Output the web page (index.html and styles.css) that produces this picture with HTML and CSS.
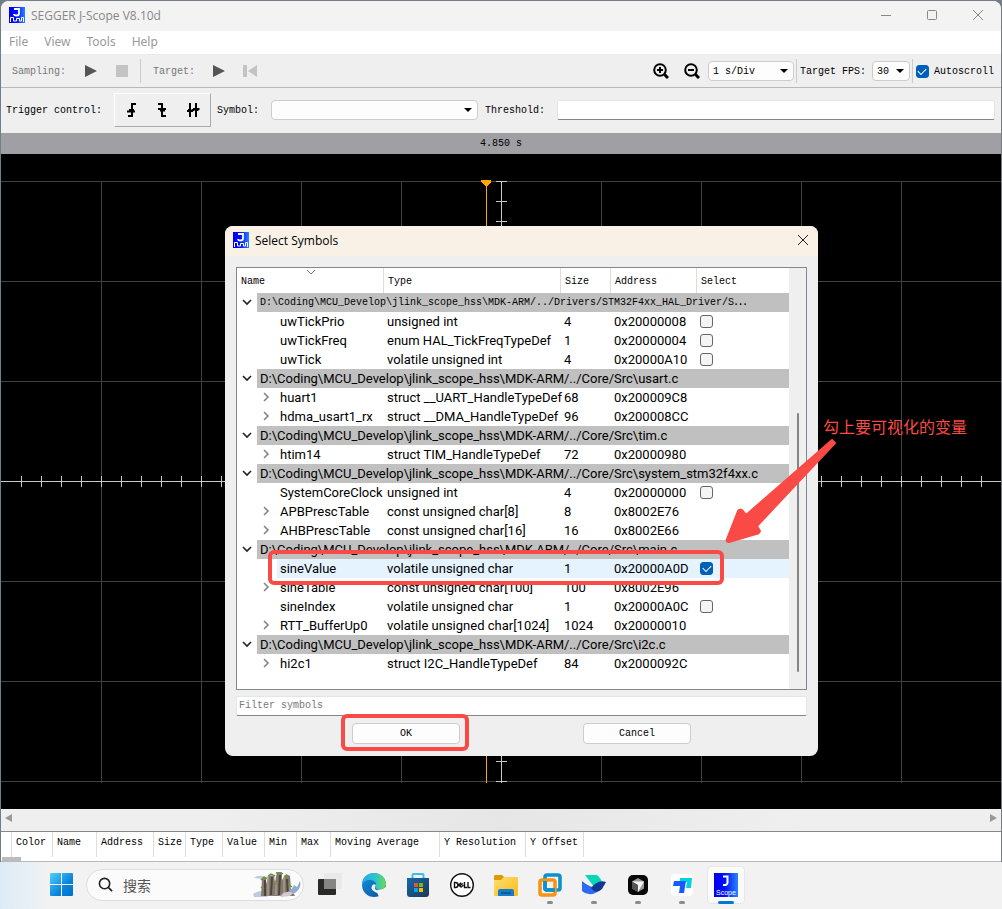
FILE: index.html
```html
<!DOCTYPE html>
<html lang="en">
<head>
<meta charset="utf-8">
<title>SEGGER J-Scope V8.10d</title>
<link rel="stylesheet" href="styles.css">
</head>
<body>
<svg class="defs" aria-hidden="true">
  <defs>
    <linearGradient id="blue" x1="0" x2="1"><stop offset="0" stop-color="#0000e8"/><stop offset=".45" stop-color="#0010ff"/><stop offset="1" stop-color="#2a84ff"/></linearGradient>
    <symbol id="logo" viewBox="0 0 16 16">
      <rect width="16" height="16" fill="url(#blue)"/>
      <path d="M5 2h5v4.500q0 2-2.500 2T5 7" fill="none" stroke="#fff" stroke-width="1.800"/>
      <path d="M1.500 15v-4.500h3V14h3v-2.500h3V14h2v-3.500h2V15" fill="none" stroke="#fff" stroke-width="1"/>
    </symbol>
    <symbol id="down" viewBox="0 0 10 8"><path d="M1 2l4 4 4-4" fill="none" stroke="#222" stroke-width="1.600"/></symbol>
    <symbol id="right" viewBox="0 0 8 10"><path d="M2 1l4 4-4 4" fill="none" stroke="#858585" stroke-width="1.600"/></symbol>
    <symbol id="play" viewBox="0 0 12 12"><path d="M0 0l12 6-12 6z" fill="#555"/></symbol>
  </defs>
</svg>

<main class="window">
  <header class="titlebar">
    <svg class="app-logo"><use href="#logo"/></svg>
    <h1>SEGGER J-Scope V8.10d</h1>
    <div class="caption-buttons">
      <button aria-label="Minimize"><svg viewBox="0 0 12 12"><path d="M1 6.500h10"/></svg></button>
      <button aria-label="Maximize"><svg viewBox="0 0 12 12"><rect x="1.500" y="1.500" width="9" height="9" rx="1"/></svg></button>
      <button aria-label="Close"><svg viewBox="0 0 12 12"><path d="M1 1l10 10M11 1L1 11"/></svg></button>
    </div>
  </header>
  <nav class="menubar">
    <button>File</button><button>View</button><button>Tools</button><button>Help</button>
  </nav>

  <div class="toolbar">
    <span class="dim sampling">Sampling:</span>
    <button class="tool" aria-label="Start sampling"><svg class="glyph"><use href="#play"/></svg></button>
    <button class="tool" aria-label="Stop sampling"><svg class="glyph" viewBox="0 0 12 12"><path d="M0 0h12v12H0z" fill="#c3c3c3"/></svg></button>
    <i class="rule"></i>
    <span class="dim target">Target:</span>
    <button class="tool" aria-label="Run target"><svg class="glyph"><use href="#play"/></svg></button>
    <button class="tool" aria-label="Reset target"><svg class="glyph wide" viewBox="0 0 14 12"><path d="M0 0h4v12H0zM14 0v12L5 6z" fill="#c3c3c3"/></svg></button>
    <span class="spacer"></span>
    <button class="tool" aria-label="Zoom in"><svg class="lens" viewBox="0 0 16 16"><circle cx="7" cy="7" r="5.800"/><path d="M11.500 11.500l3.500 3.500" stroke-width="3"/><path d="M4 7h6M7 4v6"/></svg></button>
    <button class="tool" aria-label="Zoom out"><svg class="lens" viewBox="0 0 16 16"><circle cx="7" cy="7" r="5.800"/><path d="M11.500 11.500l3.500 3.500" stroke-width="3"/><path d="M4 7h6"/></svg></button>
    <span class="drop drop-div"><select aria-label="Time per division"><option>1 s/Div</option></select></span>
    <i class="rule tight"></i>
    <label for="fps">Target FPS:</label>
    <span class="drop drop-fps"><select id="fps"><option>30</option></select></span>
    <i class="rule tight"></i>
    <label class="autoscroll"><input type="checkbox" class="check" checked>Autoscroll</label>
  </div>

  <div class="triggerbar">
    <span>Trigger control:</span>
    <div class="trigger-group">
      <button aria-label="Rising edge"><svg viewBox="0 0 16 16"><path d="M5 14h4V2h4M4 9.500h8M6 8h5" /></svg></button>
      <button aria-label="Falling edge"><svg viewBox="0 0 16 16"><path d="M4 2h4v12h4M4 7h8M6 8.500h5"/></svg></button>
      <button aria-label="Both edges"><svg viewBox="0 0 16 16"><path d="M5 1v14M11 1v14M2 9h6M3 8h3.500M8 7h6.500M9.500 8h4M8 7v2"/></svg></button>
    </div>
    <label for="symbol">Symbol:</label>
    <span class="drop drop-symbol"><select id="symbol"><option></option></select></span>
    <label for="threshold">Threshold:</label>
    <input id="threshold" class="field" type="text">
  </div>

  <div class="timebar">4.850 s</div>

  <section class="plot">
    <svg class="scope" viewBox="1 154 1000 655" preserveAspectRatio="xMidYMid slice" shape-rendering="crispEdges">
      <defs>
        <pattern id="tx" x="1" y="0" width="20" height="11" patternUnits="userSpaceOnUse" patternTransform="translate(0 476)"><path d="M.5 0v11" stroke="#c8c8c8"/></pattern>
        <pattern id="ty" x="0" y="1" width="11" height="20" patternUnits="userSpaceOnUse" patternTransform="translate(496 0)"><path d="M0 .5h11" stroke="#c8c8c8"/></pattern>
      </defs>
      <path d="M1 181.500h1000M1 281.500h1000M1 381.500h1000M1 581.500h1000M1 681.500h1000M1 781.500h1000M101.500 181v602M201.500 181v602M301.500 181v602M401.500 181v602M601.500 181v602M701.500 181v602M801.500 181v602M901.500 181v602" stroke="#404040"/>
      <path d="M1 481.500h1000M501.500 181v602" stroke="#c8c8c8"/>
      <rect x="2" y="476" width="999" height="11" fill="url(#tx)"/>
      <rect x="496" y="181" width="11" height="602" fill="url(#ty)"/>
      <path d="M486.500 181v602" stroke="#ffa500"/>
      <path d="M481 180h10v2l-5 5-5-5z" fill="#ffa500"/>
    </svg>

    <section class="dialog" role="dialog" aria-labelledby="dlg-title">
      <header class="dialog-title">
        <svg class="app-logo"><use href="#logo"/></svg>
        <h2 id="dlg-title">Select Symbols</h2>
        <button aria-label="Close dialog"><svg viewBox="0 0 12 12"><path d="M1 1l10 10M11 1L1 11"/></svg></button>
      </header>
      <div class="dialog-body">
        <div class="tree">
          <table class="symbols">
            <colgroup><col class="c-name"><col class="c-type"><col class="c-size"><col class="c-addr"><col></colgroup>
            <thead><tr><th>Name<svg class="sort" viewBox="0 0 10 6"><path d="M1 1l4 4 4-4" fill="none" stroke="#777"/></svg></th><th>Type</th><th>Size</th><th>Address</th><th>Select</th></tr></thead>
            <tbody>
              <tr class="group first"><td colspan="5"><div><svg><use href="#down"/></svg><span>D:\Coding\MCU_Develop\jlink_scope_hss\MDK-ARM/../Drivers/STM32F4xx_HAL_Driver/S<b class="more">⋯</b></span></div></td></tr>
              <tr><td>uwTickPrio</td><td>unsigned int</td><td>4</td><td>0x20000008</td><td><input type="checkbox" class="check" aria-label="uwTickPrio"></td></tr>
              <tr><td>uwTickFreq</td><td>enum HAL_TickFreqTypeDef</td><td>1</td><td>0x20000004</td><td><input type="checkbox" class="check" aria-label="uwTickFreq"></td></tr>
              <tr><td>uwTick</td><td>volatile unsigned int</td><td>4</td><td>0x20000A10</td><td><input type="checkbox" class="check" aria-label="uwTick"></td></tr>
              <tr class="group"><td colspan="5"><div><svg><use href="#down"/></svg><span>D:\Coding\MCU_Develop\jlink_scope_hss\MDK-ARM/../Core/Src\usart.c</span></div></td></tr>
              <tr><td class="node"><svg><use href="#right"/></svg>huart1</td><td>struct __UART_HandleTypeDef</td><td>68</td><td>0x200009C8</td><td></td></tr>
              <tr><td class="node"><svg><use href="#right"/></svg>hdma_usart1_rx</td><td>struct __DMA_HandleTypeDef</td><td>96</td><td>0x200008CC</td><td></td></tr>
              <tr class="group"><td colspan="5"><div><svg><use href="#down"/></svg><span>D:\Coding\MCU_Develop\jlink_scope_hss\MDK-ARM/../Core/Src\tim.c</span></div></td></tr>
              <tr><td class="node"><svg><use href="#right"/></svg>htim14</td><td>struct TIM_HandleTypeDef</td><td>72</td><td>0x20000980</td><td></td></tr>
              <tr class="group"><td colspan="5"><div><svg><use href="#down"/></svg><span>D:\Coding\MCU_Develop\jlink_scope_hss\MDK-ARM/../Core/Src\system_stm32f4xx.c</span></div></td></tr>
              <tr><td>SystemCoreClock</td><td>unsigned int</td><td>4</td><td>0x20000000</td><td><input type="checkbox" class="check" aria-label="SystemCoreClock"></td></tr>
              <tr><td class="node"><svg><use href="#right"/></svg>APBPrescTable</td><td>const unsigned char[8]</td><td>8</td><td>0x8002E76</td><td></td></tr>
              <tr><td class="node"><svg><use href="#right"/></svg>AHBPrescTable</td><td>const unsigned char[16]</td><td>16</td><td>0x8002E66</td><td></td></tr>
              <tr class="group"><td colspan="5"><div><svg><use href="#down"/></svg><span>D:\Coding\MCU_Develop\jlink_scope_hss\MDK-ARM/../Core/Src\main.c</span></div></td></tr>
              <tr class="selected"><td>sineValue</td><td>volatile unsigned char</td><td>1</td><td>0x20000A0D</td><td><input type="checkbox" class="check" aria-label="sineValue" checked></td></tr>
              <tr><td class="node"><svg><use href="#right"/></svg>sineTable</td><td>const unsigned char[100]</td><td>100</td><td>0x8002E96</td><td></td></tr>
              <tr><td>sineIndex</td><td>volatile unsigned char</td><td>1</td><td>0x20000A0C</td><td><input type="checkbox" class="check" aria-label="sineIndex"></td></tr>
              <tr><td class="node"><svg><use href="#right"/></svg>RTT_BufferUp0</td><td>volatile unsigned char[1024]</td><td>1024</td><td>0x20000010</td><td></td></tr>
              <tr class="group"><td colspan="5"><div><svg><use href="#down"/></svg><span>D:\Coding\MCU_Develop\jlink_scope_hss\MDK-ARM/../Core/Src\i2c.c</span></div></td></tr>
              <tr><td class="node"><svg><use href="#right"/></svg>hi2c1</td><td>struct I2C_HandleTypeDef</td><td>84</td><td>0x2000092C</td><td></td></tr>
            </tbody>
          </table>
          <div class="vscroll"><i></i></div>
        </div>
        <input class="field filter" type="text" placeholder="Filter symbols" aria-label="Filter symbols">
        <div class="actions"><button>OK</button><button>Cancel</button></div>
      </div>
      <i class="mark mark-row"></i>
      <i class="mark mark-ok"></i>
      <svg class="arrow" viewBox="725 438 112 106"><path d="M832 440l3 3-78 83 3 5q-1 3-4 3l-27 8q-3 0-2-3l11-28q2-3 5 0l3 4z" fill="#f94a45" stroke="#f94a45" stroke-width="2" stroke-linejoin="round"/></svg>
      <p class="note" lang="zh-CN">勾上要可视化的变量</p>
    </section>
  </section>

  <div class="hscroll"><i class="tri-left"></i><i class="tri-right"></i></div>

  <div class="signals">
    <table>
      <colgroup><col class="w10"><col class="w41"><col class="w44"><col class="w57"><col class="w32"><col class="w37"><col class="w42"><col class="w32"><col class="w34"><col class="w109"><col class="w86"><col class="w58"></colgroup>
      <thead><tr><th></th><th>Color</th><th>Name</th><th>Address</th><th>Size</th><th>Type</th><th>Value</th><th>Min</th><th>Max</th><th>Moving Average</th><th>Y Resolution</th><th>Y Offset</th></tr></thead>
    </table>
    <i class="stub"></i>
  </div>
</main>

<footer class="taskbar">
  <button class="start" aria-label="Start"><svg viewBox="0 0 23 23"><defs><linearGradient id="win" x2="1" y2="1"><stop stop-color="#4fd0fb"/><stop offset=".6" stop-color="#0b84dd"/><stop offset="1" stop-color="#006fd0"/></linearGradient></defs><path d="M1 0h10v11H0V1q0-1 1-1zM12 0h10q1 0 1 1v10H12zM0 12h11v11H1q-1 0-1-1zM12 12h11v10q0 1-1 1H12z" fill="url(#win)"/></svg></button>
  <label class="search">
    <svg class="mag" viewBox="0 0 16 16"><circle cx="7" cy="7" r="5.500" fill="none" stroke="#222" stroke-width="1.700"/><path d="M11 11l4 4" stroke="#222" stroke-width="1.800"/></svg>
    <input type="text" placeholder="搜索" lang="zh-CN" aria-label="搜索">
    <svg class="scene" viewBox="0 0 48 26">
      <path d="M1 6q6-4 10-1l5-1q-2 4-6 3zM0 22q6-4 12-3l6 4-5 2H1z" fill="#bccce0"/>
      <path d="M8 24l1-17 4-2v7l3-9 5 1 1 6 2-10 5 1v7l4-6 4 2 1 13 4 7z" fill="#85786e"/>
      <path d="M12 8v16M19 5l-1 18M27 3l-1 20M34 7l1 17" stroke="#4d443e" stroke-width="2"/>
      <path d="M15 5v19M23 10v13M31 5v19M37 13v10" stroke="#b9aa95" stroke-width="1"/>
      <path d="M8 8l3-3 3 2M15 4l3-2 4 2M23 1l4-1 3 2M31 4l4 2M8 15l3 2M21 11l3 1M35 12l4 3" fill="none" stroke="#68983c" stroke-width="1.500"/>
      <path d="M31 21q8-2 10-8l3 2 3-6q2 7-5 12-8 4-16 3z" fill="#91acd0"/><path d="M30 21q6-2 10 0l-3 3-9 1z" fill="#d9c8cd"/>
    </svg>
  </label>
  <button class="app" aria-label="Task view"><svg viewBox="0 0 24 24"><rect y="6" width="18" height="16" rx="1" fill="#292927"/><path d="M6 0h18v16H6z" fill="#e9e9e9"/><path d="M6 6h12v10H6z" fill="#858585"/></svg></button>
  <button class="app" aria-label="Edge"><svg viewBox="0 0 24 24"><defs><linearGradient id="e1" x2="1"><stop stop-color="#27a9e8"/><stop offset=".55" stop-color="#2bc4cc"/><stop offset="1" stop-color="#69dc50"/></linearGradient><linearGradient id="e2" x2="1" y2="1"><stop stop-color="#1295dd"/><stop offset="1" stop-color="#0b4d9d"/></linearGradient></defs><circle cx="12" cy="12" r="12" fill="url(#e2)"/><path d="M17 24l7-5v-5l-4 2-6 1z" fill="#f2f2f2"/><path d="M0 10C1 4 6 0 12 0c7 0 12 5 12 11 0 5-5 6-8 5-3 0-3-2-2-3 1-4-3-6-6-6-4 0-7 2-8 5z" fill="url(#e1)"/><path d="M14 12q-3 4 2 6 4 1 6 0-4 4-9 1-5-3-3-6 1-3 4-1z" fill="#f2f2f2"/></svg></button>
  <button class="app" aria-label="Store"><svg viewBox="0 0 24 24"><defs><linearGradient id="st" x2="1" y2="1"><stop stop-color="#1269af"/><stop offset="1" stop-color="#203754"/></linearGradient></defs><path d="M6.500 6V2q0-1 1-1h9q1 0 1 1v4" fill="none" stroke="#38bdec" stroke-width="2"/><path d="M1 5h22v16q0 3-3 3H4q-3 0-3-3z" fill="url(#st)"/><path d="M8 10h4v4H8z" fill="#f25022"/><path d="M13 10h4v4h-4z" fill="#7fba00"/><path d="M8 15h4v4H8z" fill="#00a4ef"/><path d="M13 15h4v4h-4z" fill="#ffb900"/></svg></button>
  <button class="app" aria-label="Dell"><svg viewBox="0 0 24 24"><circle cx="12" cy="12" r="11.300" fill="#fff" stroke="#111" stroke-width="1.400"/><path d="M4.500 9.500v5h1q2.500 0 2.500-2.500T5.500 9.500zM8.500 12l2.800-2.200M8.500 12l2.800 2.200M10 12.500l3-2M10.800 14.200l2.700-2M14.500 9v5.500H17M18 9v5.500h2.500" fill="none" stroke="#111" stroke-width="1.400"/></svg></button>
  <button class="app" aria-label="Explorer"><svg viewBox="0 0 24 24"><defs><linearGradient id="fo" x2="1" y2="1"><stop stop-color="#ffdd70"/><stop offset="1" stop-color="#fdbb1c"/></linearGradient></defs><path d="M0 3q0-1 1-1h7l2 2v5H0z" fill="#dd9a05"/><path d="M0 7h7l3-3h13q1 0 1 1v17q0 1-1 1H1q-1 0-1-1z" fill="url(#fo)"/><path d="M4 23v-5q0-2 2-2h12q2 0 2 2v5z" fill="#167bc9"/><path d="M7 19h10v2H7z" fill="#0d5d9d"/></svg></button>
  <button class="app" aria-label="VMware"><svg viewBox="0 0 24 24" fill="none" stroke-width="3.600"><rect x="7" y="2" width="15" height="15" rx="2" stroke="#0a91d0"/><rect x="2" y="7" width="15" height="15" rx="2" stroke="#f59414"/><path d="M7 8v7q0 2 2 2h8" stroke="#0a91d0"/></svg><i></i></button>
  <button class="app" aria-label="Feishu"><svg viewBox="0 0 24 24"><path d="M3 2h12q4 3 5 8l-7 5z" fill="#04d8b7"/><path d="M0 8q9 8 19 7-5 7-12 6-4 0-7-3z" fill="#2c6bf0"/><path d="M9 15q7-9 15-6l-4 7q-4 4-8 2z" fill="#123795"/></svg><i></i></button>
  <button class="app" aria-label="Cursor"><svg viewBox="0 0 24 24"><rect x="2" y="2" width="20" height="20" rx="5" fill="#080808"/><path d="M12 5l6 3.500v7L12 19l-6-3.500v-7z" fill="#999"/><path d="M6 8.500h12L12 19v-7z" fill="#f3f3f3"/><path d="M12 12v7l-6-3.500v-7z" fill="#555"/></svg><i></i></button>
  <button class="app" aria-label="ToDesk"><svg viewBox="0 0 24 24"><rect x="1" y="1" width="22" height="22" rx="4" fill="#fff"/><path d="M10 5h12l-1 10h-5l1-6h-7z" fill="#04d0e4"/><path d="M4 8h12l-2 12H9l1-7H3z" fill="#145cff"/></svg><i></i></button>
  <button class="app active" aria-label="J-Scope"><svg viewBox="0 0 24 24"><rect width="24" height="24" fill="url(#blue)"/><path d="M9 3.500h4.500v6q0 3-4.500 2.500" fill="none" stroke="#fff" stroke-width="2"/><text x="12" y="22" text-anchor="middle" class="scope-label">Scope</text></svg><i></i></button>
</footer>
</body>
</html>
```
FILE: styles.css
```css
* { box-sizing: border-box; }
body {
  margin: 0;
  min-height: 100vh;
  display: flex;
  flex-direction: column;
  background: #747c88;
  color: #000;
  font-family: "Liberation Mono", monospace;
  font-size: 10px;
}
button, input, select { font: inherit; color: inherit; }
button { border: 0; padding: 0; background: none; }
svg { display: block; flex: none; }
.defs { position: absolute; width: 0; height: 0; }

.window {
  flex: 1;
  display: flex;
  flex-direction: column;
  margin: 1px 1px 0;
  background: #efefef;
  border-radius: 8px 8px 0 0;
  overflow: hidden;
}
.titlebar {
  height: 30px;
  display: flex;
  align-items: center;
  padding: 0 0 2px 8px;
  background: #f3f3f3;
}
.app-logo { width: 16px; height: 16px; }
h1, h2 {
  flex: 1;
  margin: 0 0 0 6px;
  font: 12px "Open Sans", "Noto Sans", sans-serif;
}
h1 { color: #888; }
.caption-buttons { display: flex; }
.caption-buttons button { width: 46px; display: grid; place-items: center; }
.caption-buttons svg, .dialog-title button svg { width: 12px; height: 12px; fill: none; stroke: #888; }
.menubar {
  height: 24px;
  display: flex;
  gap: 16px;
  padding: 0 8px 2px;
  background: #fff;
  border-bottom: 1px solid #ececec;
}
.menubar button { color: #999; font: 12px "Noto Sans", sans-serif; }

.toolbar {
  height: 33px;
  display: flex;
  align-items: center;
  padding: 0 7px 0 11px;
  border-bottom: 1px solid #b8b8b8;
}
.dim { color: #777; }
.sampling { margin-right: 9px; }
.target { margin: 0 8px 0 12px; }
.tool { width: 31px; display: grid; place-items: center; }
.glyph { width: 12px; height: 12px; }
.glyph.wide { width: 14px; }
.lens { width: 16px; height: 16px; fill: none; stroke: #000; stroke-width: 2; }
.rule { width: 1px; height: 24px; background: #ccc; margin-left: 3px; }
.rule.tight { margin: 0 3px 0 2px; }
.spacer { flex: 1; }
.drop {
  position: relative;
  height: 20px;
  border: 1px solid #ccc;
  border-radius: 4px;
  background: #fdfdfd;
}
.drop select {
  width: 100%;
  height: 100%;
  padding: 0 4px;
  border: 0;
  appearance: none;
  background: transparent;
}
.drop::after {
  content: "";
  position: absolute;
  right: 5px;
  top: 7px;
  border: 4px solid transparent;
  border-top-color: #000;
  border-bottom: 0;
  pointer-events: none;
}
.drop-div { width: 86px; }
.drop-fps { width: 38px; margin-left: 6px; }
.drop-symbol { width: 207px; margin: 0 7px 0 12px; }
.autoscroll { display: flex; align-items: center; gap: 5px; }
.check {
  appearance: none;
  display: grid;
  place-items: center;
  width: 13px;
  height: 13px;
  margin: 0;
  border: 1px solid #666;
  border-radius: 3px;
  background: #f4f4f4;
}
.check:checked { background: #005fb8; border-color: #005fb8; }
.check:checked::after {
  content: "";
  width: 7px;
  height: 4px;
  margin-bottom: 2px;
  border: solid #fff;
  border-width: 0 0 1px 1px;
  transform: rotate(-45deg);
}

.triggerbar { height: 45px; display: flex; align-items: center; padding: 0 6px 1px 5px; }
.trigger-group {
  height: 34px;
  display: flex;
  margin: 0 6px 0 12px;
  padding: 0 2px 0 0;
  border: 1px solid;
  border-color: #fff #aaa #aaa #fff;
}
.trigger-group button { width: 31px; display: grid; place-items: center; }
.trigger-group svg { width: 16px; height: 16px; fill: none; stroke: #000; stroke-width: 2; }
.field {
  height: 20px;
  min-width: 0;
  padding: 0 2px;
  border: 1px solid #e5e5e5;
  border-bottom-color: #858585;
  border-radius: 2px;
  background: #fff;
}
.field::placeholder { color: #777; opacity: 1; }
#threshold { flex: 1; margin-left: 12px; }
.timebar { height: 21px; line-height: 22px; text-align: center; background: #a09fa4; }

.plot {
  flex: 1;
  position: relative;
  display: grid;
  place-items: center;
  min-height: 600px;
  background: #000;
}
.scope { position: absolute; width: 100%; height: 100%; }
.dialog {
  position: relative;
  width: 593px;
  margin: 18px 0 0 41px;
  border-radius: 8px;
  background: #efefef;
}
.dialog-title {
  height: 30px;
  display: flex;
  align-items: center;
  padding: 0 9px 1px 8px;
  border-radius: 8px 8px 0 0;
  background: #f9f1e6;
}
.dialog-title button svg { stroke: #222; }
.dialog-body { padding: 11px 11px 12px; }
.tree { display: flex; height: 423px; border: 1px solid #828790; background: #fff; }
table { border-spacing: 0; table-layout: fixed; }
th, td { padding: 0; font-weight: 400; text-align: left; white-space: nowrap; }
.symbols { flex: 1; width: 0; height: 0; }
.c-name { width: 147px; }
.c-type { width: 177px; }
.c-size { width: 50px; }
.c-addr { width: 86px; }
.symbols th { position: relative; height: 25px; padding: 2px 0 0 4px; }
.symbols th:not(:last-child), .signals th { border-right: 1px solid #ddd; }
.sort { position: absolute; left: 69px; top: 1px; width: 10px; height: 6px; }
.symbols td { height: 19px; font: 13px/19px Roboto, "Noto Sans", sans-serif; padding-left: 3px; }
.symbols td:first-child { padding-left: 43px; }
.symbols td.node { padding-left: 25px; }
.node svg { float: left; width: 8px; height: 10px; margin: 4px 10px 0 0; }
.symbols .group td { padding: 0; }
.group div { display: flex; align-items: center; height: 19px; }
.group svg { width: 10px; height: 8px; margin: 0 5px; }
.group span { flex: 1; height: 19px; padding-left: 3px; background: #c0c0c0; }
.symbols .first td { font: 10px/19px "Liberation Mono", monospace; }
.more { font: 12px/12px "Noto Sans CJK SC", sans-serif; }
.selected td:not(:first-child) { background: #e5f3ff; }
.selected td:first-child { background: linear-gradient(to right, #fff 40px, #e5f3ff 40px); }
.vscroll { width: 17px; padding: 145px 7px 17px 8px; background: #efefef; display: flex; }
.vscroll i { width: 2px; background: #858585; border-radius: 1px; }
.filter { display: block; width: 100%; margin-top: 6px; }
.actions { display: flex; justify-content: space-between; padding: 7px 116px 0; }
.actions button {
  width: 108px;
  height: 21px;
  padding-top: 1px;
  border: 1px solid #ccc;
  border-radius: 4px;
  background: #fdfdfd;
}
.mark { position: absolute; border: 4px solid #f94a45; border-radius: 6px; pointer-events: none; }
.mark-row { left: 43px; top: 324px; width: 456px; height: 35px; }
.mark-ok { left: 116px; top: 488px; width: 128px; height: 37px; }
.arrow { position: absolute; left: 500px; top: 212px; width: 112px; height: 106px; }
.note {
  position: absolute;
  left: 598px;
  top: 188px;
  margin: 0;
  font: 16px/24px "Noto Sans CJK SC", sans-serif;
  color: #f94a45;
  white-space: nowrap;
}

.hscroll {
  height: 22px;
  display: flex;
  justify-content: space-between;
  padding: 5px 4px 0;
  background: linear-gradient(to right, #efefef 20%, #e6e6e6 50%, #efefef 80%);
}
.hscroll i { width: 7px; height: 8px; background: #999; }
.tri-left { clip-path: polygon(100% 0, 100% 100%, 0 50%); }
.tri-right { clip-path: polygon(0 0, 100% 50%, 0 100%); }
.signals {
  position: relative;
  height: 31px;
  border-top: 1px solid #828790;
  border-bottom: 1px solid #b8b8b8;
  background: #fff;
}
.signals table { width: 583px; }
.signals th { height: 25px; padding: 0 0 4px 4px; }
.w10 { width: 11px; }
.w32 { width: 32px; }
.w34 { width: 34px; }
.w37 { width: 37px; }
.w41 { width: 41px; }
.w42 { width: 42px; }
.w44 { width: 44px; }
.w57 { width: 57px; }
.w58 { width: 58px; }
.w86 { width: 86px; }
.w109 { width: 109px; }
.stub { position: absolute; left: 1px; bottom: 0; width: 19px; height: 4px; background: #bbb; }

.taskbar {
  height: 47px;
  display: flex;
  align-items: center;
  padding: 0 0 2px 50px;
  background: linear-gradient(to right, #dcecf7, #f2f2f2 50px);
}
.start { width: 23px; height: 23px; }
.search {
  width: 218px;
  height: 32px;
  display: flex;
  align-items: center;
  margin: 0 4px 0 13px;
  padding: 0 2px 0 11px;
  border: 1px solid #ddd;
  border-radius: 16px;
  background: #fbfbfb;
}
.mag { width: 15px; height: 15px; }
.search input {
  flex: 1;
  min-width: 0;
  padding: 0 0 0 10px;
  border: 0;
  background: none;
  font: 14px "Noto Sans CJK SC", sans-serif;
}
.search input::placeholder { color: #555; opacity: 1; }
.scene { width: 48px; height: 26px; }
.app {
  position: relative;
  width: 44px;
  height: 40px;
  display: grid;
  place-items: center;
}
.app svg { width: 24px; height: 24px; }
.app i {
  position: absolute;
  bottom: 1px;
  left: 19px;
  width: 6px;
  height: 3px;
  border-radius: 2px;
  background: #8a8a8a;
}
.active::before {
  content: "";
  position: absolute;
  inset: 1px 3px;
  border: 1px solid #e8e8e8;
  border-radius: 4px;
  background: #fafafa;
}
.active svg { position: relative; }
.app.active i { left: 14px; width: 16px; background: #0078d4; }
.scope-label { font: 7px "Liberation Sans", sans-serif; fill: #fff; }
```
